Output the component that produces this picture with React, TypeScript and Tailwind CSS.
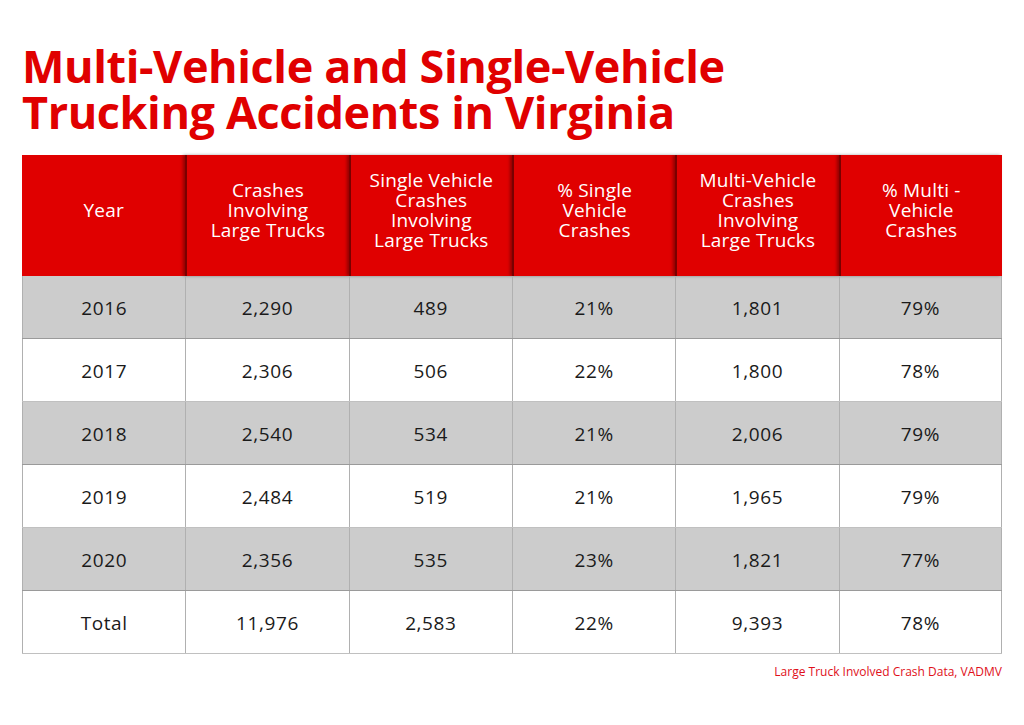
const headers = [
  ['Year'],
  ['Crashes', 'Involving', 'Large Trucks'],
  ['Single Vehicle', 'Crashes', 'Involving', 'Large Trucks'],
  ['% Single', 'Vehicle', 'Crashes'],
  ['Multi-Vehicle', 'Crashes', 'Involving', 'Large Trucks'],
  ['% Multi -', 'Vehicle', 'Crashes'],
];

const rows = [
  ['2016', '2,290', '489', '21%', '1,801', '79%'],
  ['2017', '2,306', '506', '22%', '1,800', '78%'],
  ['2018', '2,540', '534', '21%', '2,006', '79%'],
  ['2019', '2,484', '519', '21%', '1,965', '79%'],
  ['2020', '2,356', '535', '23%', '1,821', '77%'],
  ['Total', '11,976', '2,583', '22%', '9,393', '78%'],
];

export default function App() {
  return (
    <div className="w-[1024px] h-[725px] bg-white overflow-hidden" style={{ fontFamily: '"Open Sans", sans-serif' }}>
      <h1 className="pl-[22px] pt-[43px] text-[45px] leading-[46px] font-bold text-[#e00000] tracking-[-0.4px]">
        Multi-Vehicle and Single-Vehicle
        <br />
        Trucking Accidents in Virginia
      </h1>

      <div className="ml-[22px] mt-[20px] w-[980px]">
        <div className="grid grid-cols-6 h-[121px] bg-[#e00000]">
          {headers.map((h, i) => (
            <div
              key={i}
              className={`flex items-center justify-center pb-[12px] text-center text-white text-[19px] leading-[20px] tracking-[0.2px] ${i > 0 ? 'border-l-2 border-[#7a0000] shadow-[-2px_0_3px_rgba(0,0,0,0.35)]' : ''}`}
            >
              <p>
                {h.map((line, li) => (
                  <span key={li}>
                    {li > 0 && <br />}
                    {line}
                  </span>
                ))}
              </p>
            </div>
          ))}
        </div>

        {rows.map((r, ri) => (
          <div
            key={ri}
            className={`grid grid-cols-6 h-[63px] border-b ${ri % 2 === 0 && ri < 5 ? 'bg-[#cccccc] border-[#9a9a9a]' : 'bg-white border-[#c0c0c0]'}`}
          >
            {r.map((v, ci) => (
              <div
                key={ci}
                className={`flex items-center justify-center pt-[3px] text-[19px] tracking-[0.6px] text-[#1a1a1a] border-l border-[#b0b0b0] ${ci === 5 ? 'border-r' : ''}`}
              >
                {v}
              </div>
            ))}
          </div>
        ))}

        <div className="flex justify-end pt-[9px] text-[12px] text-[#e0101a]">
          Large Truck Involved Crash Data, VADMV
        </div>
      </div>
    </div>
  );
}
